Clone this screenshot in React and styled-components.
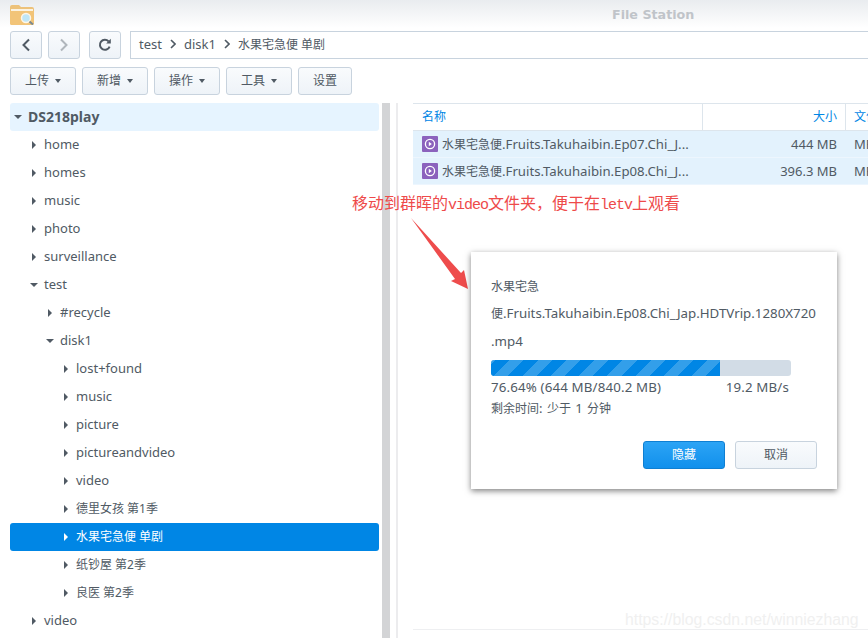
import React from "react";
import styled, { createGlobalStyle } from "styled-components";

const Global = createGlobalStyle`
  html, body { margin: 0; padding: 0; background: #fff; }
  body { font-family: "Noto Sans", "Noto Sans CJK SC", sans-serif; }
`;
const FONT = `"Noto Sans", "Noto Sans CJK SC", sans-serif`;

const Page = styled.div`
  position: relative; width: 868px; height: 638px; overflow: hidden; background: #fff;
  font-family: ${FONT}; font-size: 13px; color: #505a64;
  display: flex; flex-direction: column;
`;
const Cjk = styled.span`font-size: 12px;`;
const TitleBar = styled.header`
  height: 28px; flex: none; display: flex; align-items: center; padding-left: 10px;
  background: linear-gradient(#e9ecef, #ffffff);
`;
const TitleIcon = styled.svg`width: 25px; height: 21px; flex: none;`;
const TitleText = styled.div`
  margin: 1px 0 0 577px; font: 700 12.7px "DejaVu Sans", sans-serif; color: #c0c4c9;
`;
const NavBar = styled.div`
  display: flex; height: 28px; margin-top: 3px; padding-left: 10px; flex: none;
`;
const IconButton = styled.button`
  width: 32px; height: 28px; margin-right: ${p => p.$mr}px; padding: 0; flex: none;
  display: flex; align-items: center; justify-content: center;
  border: 1px solid #c8d3de; border-radius: 3px; background: linear-gradient(#f9fbfd, #eef3f8);
`;
const PathBox = styled.div`
  flex: 1; border: 1px solid #c8d3de; border-right: none; padding: 0 0 2px 8px;
  display: flex; align-items: center; gap: 8px; color: #505a64; font-size: 13px;
`;
const Toolbar = styled.div`
  display: flex; gap: 6px; height: 28px; margin-top: 8px; padding-left: 10px; flex: none;
`;
const ToolButton = styled.button`
  width: ${p => p.$w}px; height: 28px; padding: 0 0 2px; display: flex; align-items: center; justify-content: center; gap: 6px;
  border: 1px solid #c8d3de; border-radius: 3px; background: linear-gradient(#f9fbfd, #eef3f8);
  color: #505a64; font: 12px ${FONT};
`;
const Caret = styled.span`
  width: 0; height: 0; margin-top: 2px; border-left: 3.5px solid transparent; border-right: 3.5px solid transparent;
  border-top: 4px solid #505a64;
`;
const Body = styled.div`display: flex; flex: 1; min-height: 0; margin-top: 8px; padding-left: 10px;`;
const Tree = styled.nav`width: 369px; flex: none;`;
const TreeRow = styled.div`
  height: 28px; box-sizing: border-box; display: flex; align-items: center; border-radius: 3px;
  padding-left: ${p => p.$indent}px; padding-bottom: 2px;
  background: ${p => p.$selected ? "#0086e5" : p.$root ? "#e6f4ff" : "transparent"};
  color: ${p => p.$selected ? "#fff" : "#505a64"};
  font-weight: ${p => p.$root ? 700 : 400};
  font-size: ${p => p.$root ? 14 : 13}px;
`;
const Arrow = styled.span`
  width: 0; height: 0; flex: none; margin-top: 2px; margin-right: ${p => p.$open ? 6 : 8}px;
  ${p => p.$open
    ? `border-left: 4px solid transparent; border-right: 4px solid transparent; border-top: 4px solid #505a64;`
    : `border-top: 4px solid transparent; border-bottom: 4px solid transparent; border-left: 4px solid ${p.$white ? "#fff" : "#505a64"};`}
`;
const ScrollTrack = styled.div`
  width: 8px; margin-left: 3px; background: #d3d4d6; flex: none;
`;
const Splitter = styled.div`
  width: 2px; margin-left: 6px; background: #ececee; flex: none;
`;
const ListPane = styled.section`
  flex: 1; margin-left: 15px; min-width: 0; display: flex; flex-direction: column; border-top: 1px solid #dde5ec;
`;
const HeaderRow = styled.div`
  height: 26px; display: flex; color: #0086e5; border-bottom: 1px solid #dde5ec; flex: none; font-size: 12px;
`;
const NameHead = styled.div`
  width: 290px; flex: none; padding-left: 9px; box-sizing: border-box; line-height: 26px; border-right: 1px solid #dde5ec;
`;
const SizeHead = styled.div`
  width: 143px; flex: none; padding-right: 8px; box-sizing: border-box; text-align: right; line-height: 26px; border-right: 1px solid #dde5ec;
`;
const TypeHead = styled.div`padding-left: 8px; line-height: 26px; white-space: nowrap;`;
const FileRow = styled.div`
  height: 27px; display: flex; align-items: center; background: #e3f2fd; border-bottom: 1px solid #edf6fe; box-sizing: border-box; white-space: nowrap;
`;
const FileName = styled.div`
  width: 290px; flex: none; display: flex; align-items: center; padding-left: 9px; box-sizing: border-box; gap: 4px; font-size: 13.2px;
`;
const FileSize = styled.div`
  width: 143px; flex: none; padding-right: 9px; box-sizing: border-box; text-align: right; font-size: 13px;
`;
const FileType = styled.div`padding-left: 8px;`;
const Spacer = styled.div`flex: 1;`;
const BottomLine = styled.div`height: 1px; background: #eeeff1; margin-bottom: 8px; flex: none;`;

const Annotation = styled.div`
  position: absolute; left: 352px; top: 192px; color: #ee4a4a; font: 16px/20px "Noto Sans CJK SC", sans-serif; white-space: nowrap;
`;
const AnnotationLatin = styled.span`font: 15px "Liberation Mono", monospace; letter-spacing: -1px;`;
const PointerSvg = styled.svg`position: absolute; left: 405px; top: 212px; width: 70px; height: 84px;`;
const Dialog = styled.div`
  position: absolute; left: 471px; top: 252px; width: 366px; height: 237px; box-sizing: border-box; background: #fff;
  box-shadow: 0 2px 6px rgba(0,0,0,.5); padding: 20px 20px 0;
`;
const DialogLine = styled.div`
  height: 28px; line-height: ${p => p.$latin ? 26 : 28}px; width: 330px; white-space: nowrap; font-size: 13.3px;
`;
const ProgressTrack = styled.div`
  width: 300px; height: 16px; margin-top: 4px; background: #d2dce6; border-radius: 3px; overflow: hidden;
`;
const ProgressFill = styled.div`
  height: 100%;
  background: repeating-linear-gradient(-45deg, #0086e5 0 10px, #339fea 10px 20px);
`;
const StatLine = styled.div`
  width: 298px; display: flex; justify-content: space-between; margin-top: 3px; line-height: 16px; font-size: 13.3px; letter-spacing: .15px;
`;
const RemainLine = styled.div`margin-top: 5px; line-height: 16px; font-size: 13px; word-spacing: 1px;`;
const DialogActions = styled.div`position: absolute; right: 20px; bottom: 20px; display: flex; gap: 10px;`;
const DialogButton = styled.button`
  width: 82px; height: 28px; padding: 0 0 2px; border-radius: 3px; font: 12px ${FONT};
  border: 1px solid ${p => p.$primary ? "#0f7fd2" : "#c8d3de"};
  background: ${p => p.$primary ? "linear-gradient(#2ca4f5, #1190ec)" : "linear-gradient(#f9fbfd, #eef3f8)"};
  color: ${p => p.$primary ? "#fff" : "#505a64"};
`;
const Watermark = styled.div`
  position: absolute; left: 625px; top: 611px; font: 15.8px "Liberation Sans", sans-serif; color: #f0f0f0; white-space: nowrap;
`;
const Sep = styled.svg`width: 6px; height: 10px; flex: none;`;

const treeRows = [
  { label: "home", indent: 22 }, { label: "homes", indent: 22 }, { label: "music", indent: 22 },
  { label: "photo", indent: 22 }, { label: "surveillance", indent: 22 },
  { label: "test", indent: 20, open: true }, { label: "#recycle", indent: 38 },
  { label: "disk1", indent: 36, open: true }, { label: "lost+found", indent: 54 },
  { label: "music", indent: 54 }, { label: "picture", indent: 54 },
  { label: "pictureandvideo", indent: 54 }, { label: "video", indent: 54 },
  { cjk: "德里女孩 第1季", indent: 54 }, { cjk: "水果宅急便 单剧", indent: 54, selected: true },
  { cjk: "纸钞屋 第2季", indent: 54 }, { cjk: "良医 第2季", indent: 54 }, { label: "video", indent: 22 },
];

function Separator() {
  return <Sep viewBox="0 0 6 10"><path d="M1 1l4 4-4 4" fill="none" stroke="#505a64" strokeWidth="1.6" /></Sep>;
}
function VideoIcon() {
  return (
    <svg width="16" height="16" viewBox="0 0 16 16" style={{ flex: "none" }}>
      <rect width="16" height="16" rx="1" fill="#8b62bd" />
      <circle cx="8" cy="8" r="4.6" fill="none" stroke="#fff" strokeWidth="1.3" />
      <path d="M6.8 5.8l3 2.2-3 2.2z" fill="#fff" />
    </svg>
  );
}

export default function App() {
  return (
    <Page>
      <Global />
      <TitleBar>
        <TitleIcon viewBox="0 0 25 21">
          <path d="M0 3a2 2 0 012-2h7l2 2h11a2 2 0 012 2v14a2 2 0 01-2 2H2a2 2 0 01-2-2z" fill="#edc27a" />
          <path d="M1 5h22v3H1z" fill="#fbf3e2" />
          <path d="M0 7h24v12a2 2 0 01-2 2H2a2 2 0 01-2-2z" fill="#f2c478" />
          <circle cx="16" cy="14" r="4.5" fill="#bfe6f7" stroke="#fdf6e8" strokeWidth="1.5" />
          <path d="M19.5 17.5l3.5 3" stroke="#7b8a90" strokeWidth="2" />
        </TitleIcon>
        <TitleText>File Station</TitleText>
      </TitleBar>
      <NavBar>
        <IconButton $mr={6}><svg width="10" height="14" viewBox="0 0 10 14"><path d="M8 1.5L2.5 7 8 12.5" fill="none" stroke="#505a64" strokeWidth="2" /></svg></IconButton>
        <IconButton $mr={9}><svg width="10" height="14" viewBox="0 0 10 14"><path d="M2 1.5L7.5 7 2 12.5" fill="none" stroke="#b0b6bc" strokeWidth="2" /></svg></IconButton>
        <IconButton $mr={9}><svg width="14" height="14" viewBox="0 0 14 14"><path d="M11.6 8.6A5 5 0 1110.6 3.4" fill="none" stroke="#505a64" strokeWidth="2" /><path d="M8.2 5.4h4.6V.8z" fill="#505a64" /></svg></IconButton>
        <PathBox>test<Separator />disk1<Separator /><Cjk>水果宅急便 单剧</Cjk></PathBox>
      </NavBar>
      <Toolbar>
        <ToolButton $w={66}>上传<Caret /></ToolButton>
        <ToolButton $w={66}>新增<Caret /></ToolButton>
        <ToolButton $w={66}>操作<Caret /></ToolButton>
        <ToolButton $w={66}>工具<Caret /></ToolButton>
        <ToolButton $w={54}>设置</ToolButton>
      </Toolbar>
      <Body>
        <Tree>
          <TreeRow $root $indent={4}><Arrow $open />DS218play</TreeRow>
          {treeRows.map((r, i) => (
            <TreeRow key={i} $indent={r.indent} $selected={r.selected}>
              <Arrow $open={r.open} $white={r.selected} />{r.cjk ? <Cjk>{r.cjk}</Cjk> : r.label}
            </TreeRow>
          ))}
        </Tree>
        <ScrollTrack />
        <Splitter />
        <ListPane>
          <HeaderRow><NameHead>名称</NameHead><SizeHead>大小</SizeHead><TypeHead>文件</TypeHead></HeaderRow>
          <FileRow>
            <FileName><VideoIcon /><span><Cjk>水果宅急便</Cjk>.Fruits.Takuhaibin.Ep07.Chi_J...</span></FileName>
            <FileSize>444 MB</FileSize><FileType>MP4</FileType>
          </FileRow>
          <FileRow>
            <FileName><VideoIcon /><span><Cjk>水果宅急便</Cjk>.Fruits.Takuhaibin.Ep08.Chi_J...</span></FileName>
            <FileSize>396.3 MB</FileSize><FileType>MP4</FileType>
          </FileRow>
          <Spacer />
          <BottomLine />
        </ListPane>
      </Body>
      <Annotation>移动到群晖的<AnnotationLatin>video</AnnotationLatin>文件夹，便于在<AnnotationLatin>letv</AnnotationLatin>上观看</Annotation>
      <PointerSvg viewBox="0 0 70 84">
        <path d="M6 6L56 61 59 58 63 77 46 69 50 67z" fill="#ee4c4c" />
      </PointerSvg>
      <Dialog>
        <DialogLine><Cjk>水果宅急</Cjk></DialogLine>
        <DialogLine $latin><Cjk>便</Cjk>.Fruits.Takuhaibin.Ep08.Chi_Jap.HDTVrip.1280X720</DialogLine>
        <DialogLine $latin>.mp4</DialogLine>
        <ProgressTrack><ProgressFill style={{ width: "76.4%" }} /></ProgressTrack>
        <StatLine><span>76.64% (644 MB/840.2 MB)</span><span>19.2 MB/s</span></StatLine>
        <RemainLine><Cjk>剩余时间</Cjk>: <Cjk>少于</Cjk> 1 <Cjk>分钟</Cjk></RemainLine>
        <DialogActions>
          <DialogButton $primary>隐藏</DialogButton>
          <DialogButton>取消</DialogButton>
        </DialogActions>
      </Dialog>
      <Watermark>https://blog.csdn.net/winniezhang</Watermark>
    </Page>
  );
}
